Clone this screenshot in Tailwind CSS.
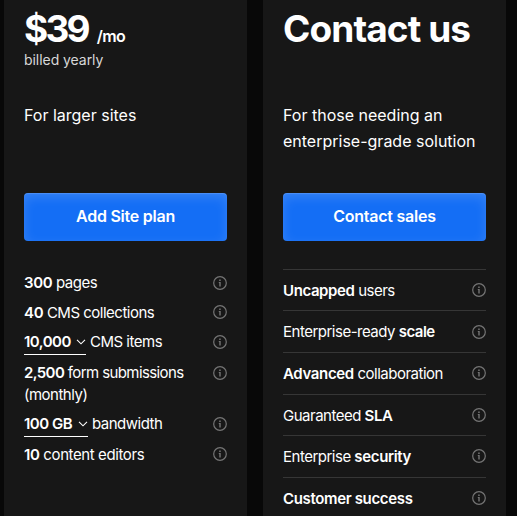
<!DOCTYPE html>
<html lang="en">
<head>
  <meta charset="UTF-8">
  <meta name="viewport" content="width=device-width, initial-scale=1.0">
  <title>Site plans</title>
  <script src="https://cdn.jsdelivr.net/npm/@tailwindcss/browser@4"></script>
</head>
<body class="bg-[#080808] font-['Inter','Liberation_Sans',sans-serif] text-white">
  <svg class="hidden">
    <symbol id="info" viewBox="0 0 14 14">
      <circle cx="7" cy="7" r="6.3" fill="none" stroke="currentColor" stroke-width="1.2"/>
      <path d="M6.2 3.6h1.5v1.3H6.2zM5.8 6h1.9v4.5H6.3V7h-.5z" fill="currentColor"/>
    </symbol>
    <symbol id="chevron" viewBox="0 0 10 6">
      <path d="M1 .8l4 4 4-4" fill="none" stroke="currentColor" stroke-width="1.1"/>
    </symbol>
  </svg>

  <main class="flex h-[516px] gap-4 overflow-hidden pl-1">
    <!-- Business plan -->
    <section class="w-[243px] shrink-0 bg-[#171717] px-5">
      <div class="h-[102px] pt-[9px]">
        <div class="flex h-[39px] items-baseline whitespace-nowrap font-semibold leading-10">
          <span class="text-[37px] font-bold tracking-[-2.8px]">$39</span>
          <span class="ml-[9px] text-base tracking-[-0.6px]">/mo</span>
        </div>
        <p class="text-sm leading-6 tracking-[-0.05px] text-[#d8d8d8]">billed yearly</p>
      </div>
      <p class="h-[91px] text-base leading-[26px]">For larger sites</p>
      <a href="#" class="flex h-12 items-center justify-center rounded-[4px] bg-[#146ef5] pb-0.5 text-base font-semibold tracking-[-0.25px] shadow-[inset_0_1px_1px_rgba(255,255,255,0.15),inset_0_4px_12px_rgba(255,255,255,0.15)]">Add Site plan</a>
      <ul class="mt-[31px] text-[15px] leading-[22px] tracking-[-0.5px]">
        <li class="mb-2 flex items-start justify-between">
          <p><b class="font-semibold tracking-[-0.35px]">300</b> pages</p>
          <svg class="mt-1 size-3.5 text-[#757575]"><use href="#info"/></svg>
        </li>
        <li class="mb-[7px] flex items-start justify-between">
          <p><b class="font-semibold tracking-[-0.35px]">40</b> CMS collections</p>
          <svg class="mt-[3px] size-3.5 text-[#757575]"><use href="#info"/></svg>
        </li>
        <li class="mb-[7px] flex h-6 items-start justify-between">
          <div class="flex">
            <button class="flex h-6 w-[62px] items-start justify-between border-b border-white"><b class="font-semibold tracking-[-0.5px]">10,000</b><svg class="mt-2 h-1.5 w-2.5"><use href="#chevron"/></svg></button>
            <p class="ml-1">CMS items</p>
          </div>
          <svg class="mt-1 size-3.5 text-[#757575]"><use href="#info"/></svg>
        </li>
        <li class="mb-[7px] flex items-start justify-between">
          <div class="tracking-[-0.6px]">
            <p><b class="font-semibold">2,500</b> form submissions</p>
            <p class="tracking-[-0.5px]">(monthly)</p>
          </div>
          <svg class="mt-1 size-3.5 text-[#757575]"><use href="#info"/></svg>
        </li>
        <li class="mb-[7px] flex h-6 items-start justify-between">
          <div class="flex">
            <button class="flex h-6 w-16 items-start justify-between border-b border-white"><b class="font-semibold tracking-[-0.5px]">100 GB</b><svg class="mt-2 h-1.5 w-2.5"><use href="#chevron"/></svg></button>
            <p class="ml-1">bandwidth</p>
          </div>
          <svg class="mt-1 size-3.5 text-[#757575]"><use href="#info"/></svg>
        </li>
        <li class="flex items-start justify-between">
          <p class="tracking-[-0.4px]"><b class="font-semibold tracking-[-0.35px]">10</b> content editors</p>
          <svg class="mt-[3px] size-3.5 text-[#757575]"><use href="#info"/></svg>
        </li>
      </ul>
    </section>

    <!-- Enterprise plan -->
    <section class="w-[243px] shrink-0 bg-[#171717] px-5">
      <div class="h-[102px] whitespace-nowrap pt-[9px] text-[37px] font-bold leading-10 tracking-[-0.9px]">Contact us</div>
      <p class="h-[91px] whitespace-nowrap text-base leading-[26px]">For those needing an<br>enterprise-grade solution</p>
      <a href="#" class="flex h-12 items-center justify-center rounded-[4px] bg-[#146ef5] pb-0.5 text-base font-semibold tracking-[-0.25px] shadow-[inset_0_1px_1px_rgba(255,255,255,0.15),inset_0_4px_12px_rgba(255,255,255,0.15)]">Contact sales</a>
      <ul class="mt-[27.8px] text-[15px] tracking-[-0.5px]">
        <li class="flex h-[41.6px] items-center justify-between border-t border-[#363636]">
          <p class="pt-0.5"><b class="font-semibold tracking-[-0.4px]">Uncapped</b> users</p>
          <svg class="size-3.5 text-[#757575]"><use href="#info"/></svg>
        </li>
        <li class="flex h-[41.6px] items-center justify-between border-t border-[#363636]">
          <p class="pt-0.5">Enterprise-ready <b class="font-semibold tracking-[-0.5px]">scale</b></p>
          <svg class="size-3.5 text-[#757575]"><use href="#info"/></svg>
        </li>
        <li class="flex h-[41.6px] items-center justify-between border-t border-[#363636]">
          <p class="pt-0.5"><b class="font-semibold tracking-[-0.35px]">Advanced</b> collaboration</p>
          <svg class="size-3.5 text-[#757575]"><use href="#info"/></svg>
        </li>
        <li class="flex h-[41.6px] items-center justify-between border-t border-[#363636]">
          <p class="pt-0.5">Guaranteed <b class="font-semibold tracking-[-0.35px]">SLA</b></p>
          <svg class="size-3.5 text-[#757575]"><use href="#info"/></svg>
        </li>
        <li class="flex h-[41.6px] items-center justify-between border-t border-[#363636]">
          <p class="pt-0.5">Enterprise <b class="font-semibold tracking-[-0.35px]">security</b></p>
          <svg class="size-3.5 text-[#757575]"><use href="#info"/></svg>
        </li>
        <li class="flex h-[41.6px] items-center justify-between border-t border-[#363636]">
          <p class="pt-0.5"><b class="font-semibold tracking-[-0.35px]">Customer success</b></p>
          <svg class="size-3.5 text-[#757575]"><use href="#info"/></svg>
        </li>
      </ul>
    </section>
  </main>
</body>
</html>
